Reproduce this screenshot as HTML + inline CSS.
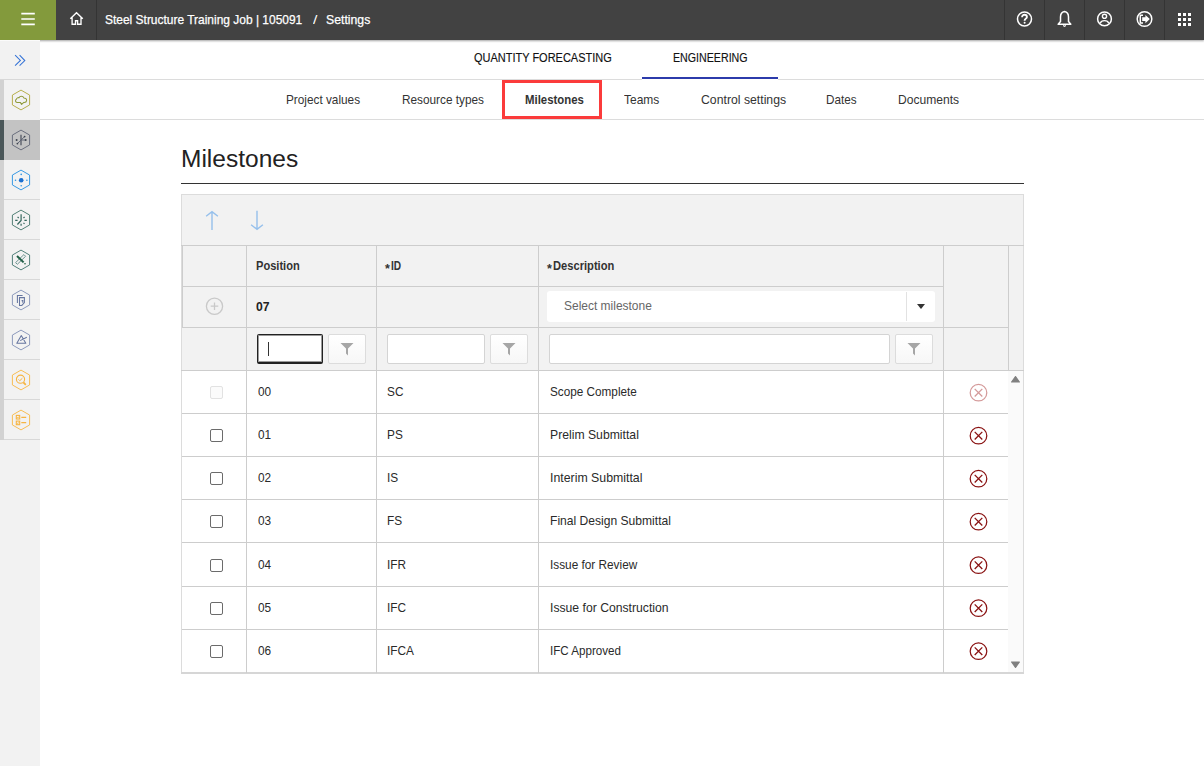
<!DOCTYPE html>
<html><head><meta charset="utf-8">
<style>
*{box-sizing:border-box;margin:0;padding:0}
html,body{width:1204px;height:766px;overflow:hidden;background:#fff;font-family:"Liberation Sans",sans-serif;color:#333}
.a{position:absolute}
.t{position:absolute;white-space:pre;display:block;transform-origin:0 0;line-height:1;z-index:6}
#top{left:0;top:0;width:1204px;height:40px;background:#424242;box-shadow:0 1px 2px rgba(0,0,0,.36);z-index:5}
#green{left:0;top:0;width:56px;height:40px;background:#839a3c}
.vd{position:absolute;top:0;width:1px;height:40px;background:#343434}
#side{left:0;top:40px;width:40px;height:726px;background:#f2f2f2}
.sep{position:absolute;left:4px;width:36px;height:1px;background:#d8d8d8}
.hl{position:absolute;height:1px;background:#cdcdcd}
.vl{position:absolute;width:1px;background:#cdcdcd}
.bg{position:absolute;background:#f2f2f2}
.inp{position:absolute;background:#fff;border:1px solid #d4d4d4;border-radius:2px}
.fbtn{position:absolute;background:linear-gradient(#fff,#f7f7f7);border:1px solid #dcdcdc;border-radius:2px}
.cb{position:absolute;width:13px;height:13px;border:1.5px solid #6b6b6b;border-radius:2px;background:#fff}
.del{position:absolute;width:19px;height:19px}
</style></head><body>

<!-- TOP BAR -->
<div id="top" class="a">
  <div id="green" class="a">
    <svg class="a" style="left:0;top:0" width="56" height="40" viewBox="0 0 56 40"><path d="M21.3 13.6 H34.8 M21.3 19 H34.8 M21.3 24.4 H34.8" stroke="#fff" stroke-width="1.6"/></svg>
  </div>
  <svg class="a" style="left:69px;top:11px" width="16" height="16" viewBox="0 0 16 16">
    <path d="M1.3 7.7 L7.5 1.7 L13.8 7.7 M3.1 6 V13.2 H6.5 V9.7 H8.6 V13.2 H12 V6" fill="none" stroke="#fff" stroke-width="1.35" stroke-linejoin="miter"/>
  </svg>
  <div class="vd" style="left:96px"></div>
  <div class="vd" style="left:1004px"></div>
  <div class="vd" style="left:1044px"></div>
  <div class="vd" style="left:1084px"></div>
  <div class="vd" style="left:1124px"></div>
  <div class="vd" style="left:1164px"></div>
  <svg class="a" style="left:1016px;top:11px" width="17" height="17" viewBox="0 0 17 17">
    <circle cx="8.5" cy="8" r="7" fill="none" stroke="#fff" stroke-width="1.5"/>
    <path d="M6.1 6.3 C6.1 4.6 7.2 3.8 8.5 3.8 C9.9 3.8 10.9 4.7 10.9 5.9 C10.9 7.6 8.6 7.7 8.6 9.7" fill="none" stroke="#fff" stroke-width="1.9"/>
    <circle cx="8.6" cy="11.8" r="1" fill="#fff"/>
  </svg>
  <svg class="a" style="left:1057px;top:10px" width="15" height="18" viewBox="0 0 15 18">
    <path d="M7.5 1.5 C4.5 2 3.5 4 3.5 7 V11.5 L1.2 14.3 H13.8 L11.5 11.5 V7 C11.5 4 10.5 2 7.5 1.5 Z" fill="none" stroke="#fff" stroke-width="1.5" stroke-linejoin="round"/>
    <path d="M6 15.5 Q7.5 17.5 9 15.5" fill="#fff" stroke="#fff" stroke-width="1"/>
  </svg>
  <svg class="a" style="left:1096px;top:10px" width="17" height="18" viewBox="0 0 17 18">
    <circle cx="8.5" cy="8.9" r="6.9" fill="none" stroke="#fff" stroke-width="1.5"/>
    <circle cx="8.5" cy="6.3" r="2.1" fill="none" stroke="#fff" stroke-width="1.4"/>
    <path d="M4.2 13.4 C4.8 11.6 6.5 10.6 8.5 10.6 C10.5 10.6 12.2 11.6 12.8 13.4" fill="none" stroke="#fff" stroke-width="1.4"/>
  </svg>
  <svg class="a" style="left:1135px;top:10px" width="19" height="19" viewBox="0 0 19 19">
    <circle cx="9.5" cy="9" r="7.3" fill="none" stroke="#fff" stroke-width="1.5"/>
    <path d="M8 5.3 H5.3 V12.9 H8" fill="none" stroke="#fff" stroke-width="1.5"/>
    <path d="M7.2 7.2 H10.4 V5 L14.8 9.1 L10.4 13.2 V11 H7.2 Z" fill="#fff"/>
  </svg>
  <svg class="a" style="left:1178px;top:13px" width="13" height="13" viewBox="0 0 13 13" fill="#fff">
    <rect x="0" y="0" width="3" height="3"/><rect x="5" y="0" width="3" height="3"/><rect x="10" y="0" width="3" height="3"/>
    <rect x="0" y="5" width="3" height="3"/><rect x="5" y="5" width="3" height="3"/><rect x="10" y="5" width="3" height="3"/>
    <rect x="0" y="10" width="3" height="3"/><rect x="5" y="10" width="3" height="3"/><rect x="10" y="10" width="3" height="3"/>
  </svg>
</div>

<!-- SIDEBAR -->
<div id="side" class="a"></div>
<div class="a" style="left:0;top:40px;width:40px;height:6px;background:#f2f2f2;border-top:1px solid #fbfbfb;z-index:7"></div>
<div class="a" style="left:0;top:80px;width:4px;height:360px;background:#d2d2d2"></div>
<div class="a" style="left:0;top:120px;width:4px;height:40px;background:#4b5759"></div>
<div class="a" style="left:4px;top:120px;width:36px;height:40px;background:#c3c3c3"></div>
<div class="a" style="left:0;top:79px;width:40px;height:1px;background:#d8d8d8"></div>
<div class="sep" style="top:199px"></div>
<div class="sep" style="top:239px"></div>
<div class="sep" style="top:279px"></div>
<div class="sep" style="top:319px"></div>
<div class="sep" style="top:359px"></div>
<div class="sep" style="top:399px"></div>
<div class="sep" style="top:439px"></div>
<svg class="a" style="left:12px;top:52px" width="16" height="16" viewBox="0 0 16 16">
  <path d="M3.1 3.1 L8.4 8.4 L3.1 13.6 M7.6 3.1 L12.8 8.6 L7.6 13.6" fill="none" stroke="#3573d6" stroke-width="1.05"/>
</svg>
<!-- hex icons -->
<svg class="a" style="left:0;top:80px" width="40" height="360" viewBox="0 0 40 360">
  
  <!-- 1 olive cloud -->
  <g transform="translate(0,20)" fill="none" stroke="#b3ab45" stroke-width="1">
    <path d="M21 -9.9 L29.6 -4.95 L29.6 4.95 L21 9.9 L12.4 4.95 L12.4 -4.95 Z" stroke-width="0.95"/>
    <path d="M17 2.4 C15.4 2.4 14.9 0.2 16.4 -0.7 C16.6 -2.1 18.2 -2.6 19 -2.3 C19.8 -4.3 23 -4.4 23.8 -2.1 C25.4 -2.1 26.9 -1 26.6 0.6 C26.4 2.1 25 2.5 23.8 2.4 L21.6 4.4 L20.3 2.4 Z" stroke="#8f9a3a" stroke-width="1.05" stroke-linejoin="round"/>
  </g>
  <!-- 2 selected tree -->
  <g transform="translate(0,60)" fill="none" stroke="#666a7a" stroke-width="1">
    <path d="M21 -9.9 L29.6 -4.95 L29.6 4.95 L21 9.9 L12.4 4.95 L12.4 -4.95 Z" stroke-width="0.95"/>
    <path d="M21 -5.2 V5.2" stroke="#454a58" stroke-width="1.15"/>
    <path d="M24.6 -3.4 L17.4 3.6 M21.5 0 H25.5" stroke="#5a6070" stroke-width="0.9"/>
    <circle cx="16.6" cy="0" r="1" fill="#3f4550" stroke="none"/><circle cx="25.7" cy="0" r="1" fill="#3f4550" stroke="none"/>
    <circle cx="24.6" cy="-3.4" r="0.9" fill="#3f4550" stroke="none"/><circle cx="17.4" cy="3.6" r="0.9" fill="#3f4550" stroke="none"/>
  </g>
  <!-- 3 blue dot -->
  <g transform="translate(0,100)" fill="none" stroke="#2e95e3" stroke-width="1">
    <path d="M21 -9.9 L29.6 -4.95 L29.6 4.95 L21 9.9 L12.4 4.95 L12.4 -4.95 Z" stroke-width="0.95"/>
    <circle cx="21.2" cy="0.2" r="2.3" fill="#1a6fd0" stroke="none"/>
    <circle cx="21.2" cy="-5.6" r="0.8" fill="#2e95e3" stroke="none"/><circle cx="21.2" cy="5.8" r="0.8" fill="#2e95e3" stroke="none"/>
    <circle cx="15.5" cy="0.2" r="0.8" fill="#2e95e3" stroke="none"/><circle cx="26.9" cy="0.2" r="0.8" fill="#2e95e3" stroke="none"/>
  </g>
  <!-- 4 clock rays -->
  <g transform="translate(0,140)" fill="none" stroke="#4a7a70" stroke-width="1">
    <path d="M21 -9.9 L29.6 -4.95 L29.6 4.95 L21 9.9 L12.4 4.95 L12.4 -4.95 Z" stroke-width="0.95"/>
    <path d="M21.1 -5.8 V0.4 L17.4 4.5 M15.2 0.4 H17.6 M24.4 0.4 H26.8 M17.6 -3.1 L18.7 -2 M24.6 -3.1 L23.5 -2 M24.5 3.8 L23.5 2.8 M21.1 3.8 V5.8" stroke="#33665c" stroke-width="1.2"/>
  </g>
  <!-- 5 pencil ruler -->
  <g transform="translate(0,180)" fill="none" stroke="#4a7a74" stroke-width="1">
    <path d="M21 -9.9 L29.6 -4.95 L29.6 4.95 L21 9.9 L12.4 4.95 L12.4 -4.95 Z" stroke-width="0.95"/>
    <path d="M15.6 2.6 L23.9 -5.4 L25.6 -3.7 L17.3 4.3 Z" stroke="#5f8a86" stroke-width="0.9"/>
    <path d="M17 -4 L23.6 2.4" stroke="#1f5e45" stroke-width="2"/>
    <circle cx="25" cy="3.8" r="0.8" fill="#1f5e45" stroke="none"/>
  </g>
  <!-- 6 documents -->
  <g transform="translate(0,220)" fill="none" stroke="#8795b8" stroke-width="1">
    <path d="M21 -9.9 L29.6 -4.95 L29.6 4.95 L21 9.9 L12.4 4.95 L12.4 -4.95 Z" stroke-width="0.95"/>
    <path d="M17.4 3 V-4.6 H22.6 M19.5 -2.4 H24.4 V2.6 L21.8 5.4 H19.5 Z M21.6 0.6 H22.8 V2.8" stroke="#6676a0" stroke-width="1.05"/>
  </g>
  <!-- 7 angle -->
  <g transform="translate(0,260)" fill="none" stroke="#8795b8" stroke-width="1">
    <path d="M21 -9.9 L29.6 -4.95 L29.6 4.95 L21 9.9 L12.4 4.95 L12.4 -4.95 Z" stroke-width="0.95"/>
    <path d="M16.8 3.3 H25.8 L21.3 -4.4 Z M20.2 0.6 L26.8 -2.7" stroke="#6676a0" stroke-width="1.05" stroke-linejoin="round"/>
  </g>
  <!-- 8 magnifier -->
  <g transform="translate(0,300)" fill="none" stroke="#f8bb4c" stroke-width="1">
    <path d="M21 -9.9 L29.6 -4.95 L29.6 4.95 L21 9.9 L12.4 4.95 L12.4 -4.95 Z" stroke-width="0.95"/>
    <circle cx="20.5" cy="-0.8" r="4.1" stroke="#f6b441" stroke-width="1.1"/>
    <path d="M18.5 -0.6 L19.8 0.7 L22.4 -1.8" stroke="#f6b441" stroke-width="1"/>
    <path d="M23.4 2.3 L25.8 4.8" stroke="#f6b441" stroke-width="1.8"/>
  </g>
  <!-- 9 list -->
  <g transform="translate(0,340)" fill="none" stroke="#f8bb4c" stroke-width="1">
    <path d="M21 -9.9 L29.6 -4.95 L29.6 4.95 L21 9.9 L12.4 4.95 L12.4 -4.95 Z" stroke-width="0.95"/>
    <rect x="16.3" y="-4.6" width="3.4" height="3.6" stroke="#f6b441" stroke-width="1.1"/><rect x="16.3" y="1.1" width="3.4" height="3.6" stroke="#f6b441" stroke-width="1.1"/>
    <path d="M17 -2.8 L18 -2 L19 -3.6 M17 2.9 L18 3.7 L19 2.1" stroke="#f6b441" stroke-width="0.7"/>
    <path d="M21.3 -2.6 H26.2 M21.3 2.6 H26.2" stroke="#f6b441" stroke-width="1.2"/>
  </g>
</svg>

<!-- TABS -->
<div class="hl" style="left:40px;top:79px;width:1164px;background:#dcdcdc"></div>
<div class="hl" style="left:40px;top:119px;width:1164px;background:#dcdcdc"></div>
<div class="a" style="left:642px;top:77px;width:136px;height:2px;background:#2c3bab"></div>
<div class="a" style="left:642px;top:79px;width:136px;height:1px;background:#fff"></div>
<div class="a" style="left:502px;top:80px;width:100px;height:39px;border:3px solid #fb3b3b"></div>

<!-- TITLE -->
<div class="a" style="left:181px;top:183px;width:843px;height:1px;background:#333"></div>

<!-- TABLE -->
<div class="bg" style="left:181px;top:194px;width:843px;height:176px"></div>
<div class="a" style="left:1008px;top:370px;width:15px;height:302px;background:#fafafa"></div>
<!-- outer borders -->
<div class="hl" style="left:181px;top:194px;width:843px;background:#dcdcdc"></div>
<div class="vl" style="left:181px;top:194px;height:479px;background:#dcdcdc"></div>
<div class="vl" style="left:1023px;top:194px;height:479px;background:#dcdcdc"></div>
<div class="vl" style="left:182px;top:245px;height:83px;background:#cdcdcd"></div>
<div class="hl" style="left:181px;top:245px;width:843px"></div>
<div class="hl" style="left:182px;top:286px;width:761px"></div>
<div class="hl" style="left:182px;top:327px;width:826px"></div>
<div class="hl" style="left:181px;top:370px;width:843px"></div>
<div class="hl" style="left:182px;top:413px;width:826px"></div>
<div class="hl" style="left:182px;top:456px;width:826px"></div>
<div class="hl" style="left:182px;top:499px;width:826px"></div>
<div class="hl" style="left:182px;top:542px;width:826px"></div>
<div class="hl" style="left:182px;top:586px;width:826px"></div>
<div class="hl" style="left:182px;top:629px;width:826px"></div>
<div class="hl" style="left:181px;top:672px;width:843px;height:2px;background:#d6d6d6"></div>
<!-- verticals -->
<div class="vl" style="left:246px;top:245px;height:428px"></div>
<div class="vl" style="left:376px;top:245px;height:428px"></div>
<div class="vl" style="left:538px;top:245px;height:428px"></div>
<div class="vl" style="left:943px;top:245px;height:428px"></div>
<div class="vl" style="left:1008px;top:245px;height:125px"></div>

<!-- toolbar arrows -->
<svg class="a" style="left:204px;top:209px" width="62" height="24" viewBox="0 0 62 24">
  <path d="M8 2.6 V21 M2.1 7.2 L8 2.6 L13.9 7.2" fill="none" stroke="#96c0ec" stroke-width="1.4"/>
  <path d="M53 1.8 V20.3 M47.1 15.7 L53 20.3 L58.9 15.7" fill="none" stroke="#96c0ec" stroke-width="1.4"/>
</svg>

<!-- asterisks -->
<span class="t" style="left:385px;top:263px;font-size:12.5px;font-weight:bold;color:#333">*</span>
<span class="t" style="left:547px;top:263px;font-size:12.5px;font-weight:bold;color:#333">*</span>

<!-- adder row -->
<svg class="a" style="left:205px;top:297px" width="19" height="19" viewBox="0 0 19 19">
  <circle cx="9.5" cy="9.2" r="8.1" fill="none" stroke="#c9c9c9" stroke-width="1.3"/>
  <path d="M9.5 5.4 V13 M5.7 9.2 H13.3" stroke="#c9c9c9" stroke-width="1.3"/>
</svg>
<div class="a" style="left:547px;top:291px;width:388px;height:31px;background:#fff;border-radius:3px"></div>
<div class="a" style="left:906px;top:292px;width:1px;height:29px;background:#e2e2e2"></div>
<svg class="a" style="left:916px;top:303px" width="10" height="7" viewBox="0 0 10 7"><path d="M1 1 H9 L5 6 Z" fill="#333"/></svg>

<!-- filter row -->
<div class="a" style="left:257px;top:334px;width:66px;height:30px;background:#fff;border:1px solid #222;border-bottom-width:2px;border-radius:2px;box-shadow:inset 0 0 0 1px rgba(30,30,30,.45)"></div>
<div class="a" style="left:268px;top:342px;width:1px;height:14px;background:#333"></div>
<div class="fbtn" style="left:328px;top:334px;width:38px;height:30px"></div>
<div class="inp" style="left:387px;top:334px;width:98px;height:30px"></div>
<div class="fbtn" style="left:490px;top:334px;width:38px;height:30px"></div>
<div class="inp" style="left:549px;top:334px;width:341px;height:30px"></div>
<div class="fbtn" style="left:895px;top:334px;width:38px;height:30px"></div>
<svg class="a" style="left:340px;top:342px" width="14" height="14" viewBox="0 0 14 14"><path d="M0.5 1 H13.5 L8 6.5 V13.5 L6 11.5 V6.5 Z" fill="#a6a6a6"/></svg>
<svg class="a" style="left:502px;top:342px" width="14" height="14" viewBox="0 0 14 14"><path d="M0.5 1 H13.5 L8 6.5 V13.5 L6 11.5 V6.5 Z" fill="#a6a6a6"/></svg>
<svg class="a" style="left:907px;top:342px" width="14" height="14" viewBox="0 0 14 14"><path d="M0.5 1 H13.5 L8 6.5 V13.5 L6 11.5 V6.5 Z" fill="#a6a6a6"/></svg>

<!-- checkboxes -->
<div class="cb" style="left:210px;top:386.0px;border-color:#e2e2e2;background:#fbfbfb"></div>
<div class="cb" style="left:210px;top:429.1px"></div>
<div class="cb" style="left:210px;top:472.3px"></div>
<div class="cb" style="left:210px;top:515.4px"></div>
<div class="cb" style="left:210px;top:558.6px"></div>
<div class="cb" style="left:210px;top:601.7px"></div>
<div class="cb" style="left:210px;top:644.9px"></div>

<!-- delete icons -->
<svg class="a" style="left:0;top:0" width="1204" height="766" viewBox="0 0 1204 766">
  
  <g transform="translate(978.5,392.3)" stroke="#d49a9a"><circle cx="0" cy="0.4" r="8.3" fill="none" stroke-width="1.25"/><path d="M-3.8 -3.4 L3.8 4.2 M3.8 -3.4 L-3.8 4.2" stroke-width="1.3"/></g>
  <g transform="translate(978.5,435.3)" stroke="#8a1313"><circle cx="0" cy="0.4" r="8.3" fill="none" stroke-width="1.25"/><path d="M-3.8 -3.4 L3.8 4.2 M3.8 -3.4 L-3.8 4.2" stroke-width="1.3"/></g>
  <g transform="translate(978.5,478.3)" stroke="#8a1313"><circle cx="0" cy="0.4" r="8.3" fill="none" stroke-width="1.25"/><path d="M-3.8 -3.4 L3.8 4.2 M3.8 -3.4 L-3.8 4.2" stroke-width="1.3"/></g>
  <g transform="translate(978.5,521.3)" stroke="#8a1313"><circle cx="0" cy="0.4" r="8.3" fill="none" stroke-width="1.25"/><path d="M-3.8 -3.4 L3.8 4.2 M3.8 -3.4 L-3.8 4.2" stroke-width="1.3"/></g>
  <g transform="translate(978.5,564.8)" stroke="#8a1313"><circle cx="0" cy="0.4" r="8.3" fill="none" stroke-width="1.25"/><path d="M-3.8 -3.4 L3.8 4.2 M3.8 -3.4 L-3.8 4.2" stroke-width="1.3"/></g>
  <g transform="translate(978.5,607.8)" stroke="#8a1313"><circle cx="0" cy="0.4" r="8.3" fill="none" stroke-width="1.25"/><path d="M-3.8 -3.4 L3.8 4.2 M3.8 -3.4 L-3.8 4.2" stroke-width="1.3"/></g>
  <g transform="translate(978.5,650.8)" stroke="#8a1313"><circle cx="0" cy="0.4" r="8.3" fill="none" stroke-width="1.25"/><path d="M-3.8 -3.4 L3.8 4.2 M3.8 -3.4 L-3.8 4.2" stroke-width="1.3"/></g>
  <path d="M1011.6 382 L1019.4 382 L1015.5 376.6 Z" fill="#808080" stroke="#808080" stroke-width="1.2" stroke-linejoin="round"/>
  <path d="M1011.6 662 L1019.4 662 L1015.5 667.4 Z" fill="#808080" stroke="#808080" stroke-width="1.2" stroke-linejoin="round"/>
</svg>

<span class="t" style="left:105.10px;top:13.30px;font-size:13px;font-weight:normal;color:#fff;transform:scaleX(0.9200);-webkit-text-stroke:0.25px #fff;">Steel Structure Training Job | 105091</span>
<span class="t" style="left:312.60px;top:13.09px;font-size:13.6px;font-weight:normal;color:#fff;transform:scaleX(1.1500);">/</span>
<span class="t" style="left:325.60px;top:13.30px;font-size:13px;font-weight:normal;color:#fff;transform:scaleX(0.9426);-webkit-text-stroke:0.25px #fff;">Settings</span>
<span class="t" style="left:473.60px;top:52.39px;font-size:12.3px;font-weight:normal;color:#111;transform:scaleX(0.8935);-webkit-text-stroke:0.15px #111;">QUANTITY FORECASTING</span>
<span class="t" style="left:672.90px;top:52.09px;font-size:12.3px;font-weight:normal;color:#111;transform:scaleX(0.8663);-webkit-text-stroke:0.15px #111;">ENGINEERING</span>
<span class="t" style="left:286.40px;top:94.16px;font-size:12.8px;font-weight:normal;color:#333;transform:scaleX(0.9210);">Project values</span>
<span class="t" style="left:402.10px;top:94.16px;font-size:12.8px;font-weight:normal;color:#333;transform:scaleX(0.9225);">Resource types</span>
<span class="t" style="left:624.40px;top:94.16px;font-size:12.8px;font-weight:normal;color:#333;transform:scaleX(0.9368);">Teams</span>
<span class="t" style="left:700.60px;top:94.16px;font-size:12.8px;font-weight:normal;color:#333;transform:scaleX(0.9573);">Control settings</span>
<span class="t" style="left:825.90px;top:94.16px;font-size:12.8px;font-weight:normal;color:#333;transform:scaleX(0.9147);">Dates</span>
<span class="t" style="left:897.70px;top:94.16px;font-size:12.8px;font-weight:normal;color:#333;transform:scaleX(0.9431);">Documents</span>
<span class="t" style="left:525.20px;top:94.16px;font-size:12.8px;font-weight:bold;color:#333;transform:scaleX(0.8894);">Milestones</span>
<span class="t" style="left:181.16px;top:148.11px;font-size:23.5px;font-weight:normal;color:#222;transform:scaleX(1.0432);">Milestones</span>
<span class="t" style="left:255.70px;top:260.16px;font-size:12.8px;font-weight:bold;color:#333;transform:scaleX(0.8667);">Position</span>
<span class="t" style="left:391.00px;top:260.16px;font-size:12.8px;font-weight:bold;color:#333;transform:scaleX(0.7923);">ID</span>
<span class="t" style="left:553.00px;top:260.16px;font-size:12.8px;font-weight:bold;color:#333;transform:scaleX(0.8714);">Description</span>
<span class="t" style="left:255.70px;top:301.16px;font-size:12.8px;font-weight:bold;color:#222;transform:scaleX(0.9500);">07</span>
<span class="t" style="left:563.70px;top:300.02px;font-size:12.5px;font-weight:normal;color:#666;transform:scaleX(0.9576);">Select milestone</span>
<span class="t" style="left:257.60px;top:386.46px;font-size:12.8px;font-weight:normal;color:#2a2a2a;transform:scaleX(0.9230);">00</span>
<span class="t" style="left:387.30px;top:386.46px;font-size:12.8px;font-weight:normal;color:#2a2a2a;transform:scaleX(0.9230);">SC</span>
<span class="t" style="left:549.90px;top:386.46px;font-size:12.8px;font-weight:normal;color:#2a2a2a;transform:scaleX(0.9179);">Scope Complete</span>
<span class="t" style="left:257.60px;top:429.46px;font-size:12.8px;font-weight:normal;color:#2a2a2a;transform:scaleX(0.9230);">01</span>
<span class="t" style="left:387.30px;top:429.46px;font-size:12.8px;font-weight:normal;color:#2a2a2a;transform:scaleX(0.9230);">PS</span>
<span class="t" style="left:549.90px;top:429.46px;font-size:12.8px;font-weight:normal;color:#2a2a2a;transform:scaleX(0.9538);">Prelim Submittal</span>
<span class="t" style="left:257.60px;top:472.46px;font-size:12.8px;font-weight:normal;color:#2a2a2a;transform:scaleX(0.9230);">02</span>
<span class="t" style="left:387.30px;top:472.46px;font-size:12.8px;font-weight:normal;color:#2a2a2a;transform:scaleX(0.9230);">IS</span>
<span class="t" style="left:549.90px;top:472.46px;font-size:12.8px;font-weight:normal;color:#2a2a2a;transform:scaleX(0.9625);">Interim Submittal</span>
<span class="t" style="left:257.60px;top:515.46px;font-size:12.8px;font-weight:normal;color:#2a2a2a;transform:scaleX(0.9230);">03</span>
<span class="t" style="left:387.30px;top:515.46px;font-size:12.8px;font-weight:normal;color:#2a2a2a;transform:scaleX(0.9230);">FS</span>
<span class="t" style="left:549.90px;top:515.46px;font-size:12.8px;font-weight:normal;color:#2a2a2a;transform:scaleX(0.9445);">Final Design Submittal</span>
<span class="t" style="left:257.60px;top:559.46px;font-size:12.8px;font-weight:normal;color:#2a2a2a;transform:scaleX(0.9230);">04</span>
<span class="t" style="left:387.30px;top:559.46px;font-size:12.8px;font-weight:normal;color:#2a2a2a;transform:scaleX(0.9230);">IFR</span>
<span class="t" style="left:549.90px;top:559.46px;font-size:12.8px;font-weight:normal;color:#2a2a2a;transform:scaleX(0.9221);">Issue for Review</span>
<span class="t" style="left:257.60px;top:602.46px;font-size:12.8px;font-weight:normal;color:#2a2a2a;transform:scaleX(0.9230);">05</span>
<span class="t" style="left:387.30px;top:602.46px;font-size:12.8px;font-weight:normal;color:#2a2a2a;transform:scaleX(0.9230);">IFC</span>
<span class="t" style="left:549.90px;top:602.46px;font-size:12.8px;font-weight:normal;color:#2a2a2a;transform:scaleX(0.9528);">Issue for Construction</span>
<span class="t" style="left:257.60px;top:645.46px;font-size:12.8px;font-weight:normal;color:#2a2a2a;transform:scaleX(0.9230);">06</span>
<span class="t" style="left:387.30px;top:645.46px;font-size:12.8px;font-weight:normal;color:#2a2a2a;transform:scaleX(0.9230);">IFCA</span>
<span class="t" style="left:549.90px;top:645.46px;font-size:12.8px;font-weight:normal;color:#2a2a2a;transform:scaleX(0.9077);">IFC Approved</span>
</body></html>
